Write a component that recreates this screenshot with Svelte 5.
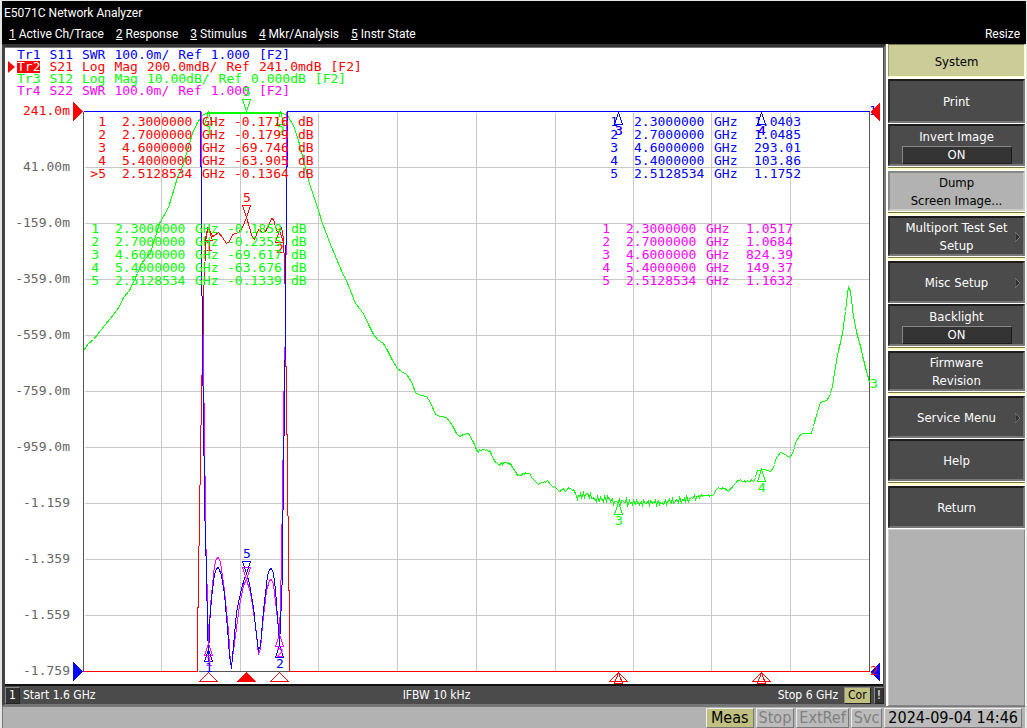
<script lang="ts">
	interface Marker {
		x: number;
		y: number;
		label: string;
		color: string;
		down?: boolean;
	}

	interface Softkey {
		lines: string[];
		value?: string;
		light?: boolean;
		submenu?: boolean;
		divided?: boolean; // yellow divider below the key
	}

	const menus = [
		['1', 'Active Ch/Trace'],
		['2', 'Response'],
		['3', 'Stimulus'],
		['4', 'Mkr/Analysis'],
		['5', 'Instr State']
	];

	const traces = [
		{ name: 'Tr1', setup: 'S11 SWR 100.0m/ Ref 1.000 [F2]', cls: 'blue' },
		{ name: 'Tr2', setup: 'S21 Log Mag 200.0mdB/ Ref 241.0mdB [F2]', cls: 'red' },
		{ name: 'Tr3', setup: 'S12 Log Mag 10.00dB/ Ref 0.000dB [F2]', cls: 'green' },
		{ name: 'Tr4', setup: 'S22 SWR 100.0m/ Ref 1.000 [F2]', cls: 'magenta' }
	];
	let activeTrace = 'Tr2';

	const freqs = ['2.3000000', '2.7000000', '4.6000000', '5.4000000', '2.5128534'];
	const readouts = [
		{ cls: 'red s21', unit: 'dB', active: 5, values: ['-0.1716', '-0.1799', '-69.746', '-63.905', '-0.1364'] },
		{ cls: 'green s12', unit: 'dB', active: 0, values: ['-0.1859', '-0.2355', '-69.617', '-63.676', '-0.1339'] },
		{ cls: 'blue s11', unit: '', active: 0, values: ['1.0403', '1.0485', '293.01', '103.86', '1.1752'] },
		{ cls: 'magenta s22', unit: '', active: 0, values: ['1.0517', '1.0684', '824.39', '149.37', '1.1632'] }
	];

	const scale = ['241.0m', '41.00m', '-159.0m', '-359.0m', '-559.0m', '-759.0m', '-959.0m', '-1.159', '-1.359', '-1.559', '-1.759'];
	const gridX = [161, 240, 318, 397, 476, 555, 633, 711, 790];
	const gridY = [167, 223, 279, 335, 391, 447, 503, 559, 615];

	const BLUE = '#0000ff';
	const RED = '#ff0000';
	const GREEN = '#00ff00';
	const MAGENTA = '#ff00ff';

	const s21 =
		'83,671 197,671 197,607 198,607 198,551 199,540 199,490 200,480 200,430 201,420 201,380 202,370 202,340 203,330 203,290 204,280 205,243 207,227 209,229 212,236 214,235 218,232 222,237 226,243 229,241 232,234 238,232 242,227 246,217 249,227 252,237 254,239 258,229 262,232 265,231 268,225 271,218 273,219 275,226 277,232 279,230 281,227 283,238 284,267 285,300 285,366 286,366 286,434 287,434 287,510 288,520 288,590 289,590 289,671 869,671';
	const s11 =
		'83,111 200,111 200,166 201,166 201,290 202,300 202,380 203,390 203,450 204,460 204,510 205,530 206,580 207,620 208,661 209,625 211,598 214,574 216,568 218,567 221,575 224,594 227,628 229,655 231,668 233,645 236,612 241,588 244,578 246,573 249,583 253,607 256,635 258,650 260,645 263,610 267,575 269,569 271,568 273,573 275,590 278,630 279,645 281,600 282,570 282,520 283,500 283,442 284,430 284,366 285,354 285,250 286,240 286,166 287,166 287,111 869,111';
	const s22 =
		'201,111 201,180 201,290 203,310 203,395 204,410 204,470 205,480 205,530 207,600 208,645 210,605 214,565 216,558 218,557 220,562 224,590 228,630 230,664 231,665 235,635 239,605 243,585 246,579 250,592 255,625 258,654 260,648 262,625 266,590 269,580 271,579 273,584 276,610 279,635 280,600 281,560 282,490 283,430 284,354 285,340 285,260 286,250 286,111';

	const s12Points = [
		83, 350, 88, 343, 93, 339, 97, 334, 104, 325, 110, 318, 119, 306, 123, 297, 129, 290, 137, 273, 141, 263, 150, 252, 155, 236, 159, 223,
		168, 207, 177, 177, 183, 163, 192, 133, 197, 122, 202, 115, 207, 112, 280, 112, 287, 115, 293, 125, 298, 140, 305, 167, 308, 180,
		318, 210, 322, 223, 330, 244, 340, 268, 348, 285, 355, 303, 360, 309, 364, 315, 368, 324, 373, 334, 377, 339, 383, 343, 387, 350,
		392, 360, 397, 368, 401, 371, 406, 374, 411, 381, 415, 392, 420, 395, 426, 396, 430, 402, 435, 414, 440, 416, 446, 417, 452, 425,
		456, 433, 459, 436, 463, 434, 468, 433, 472, 440, 477, 451, 483, 449, 489, 450, 494, 460, 498, 464, 504, 462, 510, 463, 514, 470,
		517, 475, 521, 475, 523, 473, 529, 473, 533, 479, 537, 483, 543, 482, 547, 480, 551, 485, 555, 487, 559, 491, 563, 488, 565, 491,
		568, 487, 574, 491, 576, 496, 582, 495, 587, 493, 594, 499, 602, 499, 608, 498, 614, 501, 640, 502, 662, 502, 680, 500, 692, 498,
		700, 495, 712, 495, 717, 488, 724, 488, 728, 491, 732, 486, 738, 480, 746, 481, 754, 480, 757, 470, 764, 469, 770, 471, 773, 467,
		776, 457, 780, 452, 785, 454, 789, 457, 792, 453, 796, 440, 800, 434, 803, 433, 811, 433, 815, 418, 820, 402, 826, 400, 829, 396,
		832, 386, 835, 366, 838, 350, 842, 333, 845, 311, 847, 293, 848, 287, 850, 291, 853, 316, 856, 331, 860, 346, 864, 363, 869, 382
	];

	// Fill in one sample per pixel, with receiver noise near the floor
	function sampleTrace(pts: number[]) {
		const out: string[] = [];
		for (let i = 0; i < pts.length - 2; i += 2) {
			const [x0, y0, x1, y1] = pts.slice(i, i + 4);
			out.push(`${x0},${y0}`);
			if (x0 < 470) continue;
			for (let x = x0 + 1; x < x1; x++) {
				const amp = x > 574 && x < 700 ? 4 : x < 760 ? 1 : 0;
				const noise = Math.round(Math.sin(x * 12.9898) * Math.cos(x * 4.1) * amp);
				out.push(`${x},${Math.round(y0 + ((y1 - y0) * (x - x0)) / (x1 - x0)) + noise}`);
			}
		}
		out.push(pts.slice(-2).join(','));
		return out.join(' ');
	}
	const s12 = sampleTrace(s12Points);

	const markers: Marker[] = [
		{ x: 208, y: 643, label: '1', color: MAGENTA },
		{ x: 279, y: 634, label: '2', color: MAGENTA },
		{ x: 246, y: 579, label: '', color: MAGENTA, down: true },
		{ x: 618, y: 112, label: '3', color: MAGENTA },
		{ x: 761, y: 112, label: '4', color: MAGENTA },
		{ x: 208, y: 112, label: '1', color: GREEN },
		{ x: 280, y: 112, label: '2', color: GREEN },
		{ x: 618, y: 502, label: '3', color: GREEN },
		{ x: 761, y: 469, label: '4', color: GREEN },
		{ x: 246, y: 111, label: '5', color: GREEN, down: true },
		{ x: 208, y: 228, label: '1', color: RED },
		{ x: 279, y: 230, label: '2', color: RED },
		{ x: 246, y: 217, label: '5', color: RED, down: true },
		{ x: 208, y: 649, label: '1', color: BLUE },
		{ x: 279, y: 645, label: '2', color: BLUE },
		{ x: 618, y: 112, label: '3', color: BLUE },
		{ x: 761, y: 112, label: '4', color: BLUE },
		{ x: 246, y: 573, label: '5', color: BLUE, down: true }
	];

	const softkeys: Softkey[] = [
		{ lines: ['Print'] },
		{ lines: ['Invert Image'], value: 'ON', divided: true },
		{ lines: ['Dump', 'Screen Image...'], light: true, divided: true },
		{ lines: ['Multiport Test Set', 'Setup'], submenu: true, divided: true },
		{ lines: ['Misc Setup'], submenu: true },
		{ lines: ['Backlight'], value: 'ON', divided: true },
		{ lines: ['Firmware', 'Revision'], divided: true },
		{ lines: ['Service Menu'], submenu: true },
		{ lines: ['Help'], divided: true },
		{ lines: ['Return'] }
	];
</script>

<div class="app">
	<header>
		<h1>E5071C Network Analyzer</h1>
		<nav>
			{#each menus as [key, label]}
				<button><u>{key}</u> {label}</button>
			{/each}
			<button class="resize">Resize</button>
		</nav>
	</header>

	<div class="body">
		<main>
			<div class="screen">
				<div class="traces">
					{#each traces as t (t.name)}
						<button class="trace {t.cls}" class:active={t.name === activeTrace} onclick={() => (activeTrace = t.name)}>
							<span class="name">{t.name}</span>
							{#each t.setup.split(' ') as word}
								<span>{word}</span>
							{/each}
						</button>
					{/each}
				</div>

				<svg class="plot" viewBox="5 97 878 587">
					<!-- half a pixel puts the one pixel strokes on whole pixels -->
					<g transform="translate(0.5 0.5)">
						{#each gridX as x}
							<line x1={x} y1="112" x2={x} y2="670" stroke="#c8c8c8" />
						{/each}
						{#each gridY as y}
							<line x1="84" y1={y} x2="868" y2={y} stroke="#c8c8c8" />
						{/each}
						<path d="M83 111v560M869 111v560M198 671h91" fill="none" stroke="#555" />
					</g>

					{#each scale as label, i}
						<text x="70" y={115 + i * 56} text-anchor="end" fill={i === 0 ? RED : '#666'}>{label}</text>
					{/each}

					<text x="869" y="115" fill={BLUE}>1</text>

					<g transform="translate(0.5 0.5)">
						<polyline points={s12} stroke={GREEN} />
						<line x1="206" y1="112" x2="281" y2="112" stroke={GREEN} stroke-width="2" />
						<polyline points={s22} stroke={MAGENTA} />
						<polyline points={s21} stroke={RED} />
						<polyline points={s11} stroke={BLUE} />
						{#each markers as m}
							<path d="M{m.x} {m.y}l-4 {m.down ? -12 : 12}h8z" fill="none" stroke={m.color} />
						{/each}
					</g>

					{#each markers as m}
						<text x={m.x + 1} y={m.down ? m.y - 15 : m.y + 23} text-anchor="middle" fill={m.color}>{m.label}</text>
					{/each}

					<!-- reference level handles -->
					<path d="M73 102v19l10-9z" fill={RED} />
					<path d="M73 662v19l10-9z" fill={BLUE} />
					<path d="M880 102v19l-10-9z" fill={RED} />
					<path d="M880 662v19l-10-9z" fill={BLUE} />
					<text x="870" y="675" fill={RED}>2</text>
					<text x="870" y="388" fill={GREEN}>3</text>

					<!-- stimulus markers -->
					<g transform="translate(0.5 0.5)">
						{#each [208, 246, 279, 618, 761] as x}
							<path d="M{x} 672l-9 9h18z" fill={x === 246 ? RED : 'none'} stroke={RED} />
						{/each}
						{#each [618, 761] as x}
							<path d="M{x} 672l-4 11h8z" fill="none" stroke={RED} />
						{/each}
					</g>
				</svg>

				{#each readouts as r}
					<table class="readout {r.cls}">
						<tbody>
							{#each freqs as f, i}
								<tr>
									<td class="num">{r.active === i + 1 ? '>' : ''}{i + 1}</td>
									<td class="freq">{f}</td>
									<td class="ghz">GHz</td>
									<td class="val">{r.values[i]}</td>
									<td>{r.unit}</td>
								</tr>
							{/each}
						</tbody>
					</table>
				{/each}
			</div>

			<div class="channel">
				<span class="box">1</span>
				<span class="start">Start 1.6 GHz</span>
				<span class="ifbw">IFBW 10 kHz</span>
				<span class="stop">Stop 6 GHz</span>
				<span class="box cor">Cor</span>
				<span class="box">!</span>
			</div>
		</main>

		<aside>
			<h2>System</h2>
			<ul>
				{#each softkeys as k}
					<li class:divided={k.divided}>
						<button class:light={k.light}>
							{#each k.lines as line}
								<span>{line}</span>
							{/each}
							{#if k.value}
								<span class="value">{k.value}</span>
							{/if}
							{#if k.submenu}
								<svg class="arrow" viewBox="0 0 6 12"><path d="M0 1v10l5-5z" fill="#333" stroke="#777" /></svg>
							{/if}
						</button>
					</li>
					{#if k.divided}
						<li class="divider" role="separator"></li>
					{/if}
				{/each}
			</ul>
			<div class="blank"></div>
		</aside>
	</div>

	<footer>
		<span class="on">Meas</span>
		<span>Stop</span>
		<span>ExtRef</span>
		<span>Svc</span>
		<time datetime="2024-09-04T14:46">2024-09-04 14:46</time>
	</footer>
</div>

<style>
	:global(body) {
		background: #e4e6e4;
	}

	.app {
		display: flex;
		flex-direction: column;
		min-height: 100vh;
		box-sizing: border-box;
		padding: 1px 1px 1px 2px;
		font-family: 'DejaVu Sans Condensed', 'DejaVu Sans', sans-serif;
		font-stretch: condensed;
		font-size: 12px;
	}

	button {
		font: inherit;
		color: inherit;
		background: none;
		border: 0;
		padding: 0;
	}

	header {
		background: #000;
		color: #fff;
		font-family: Roboto, 'Noto Sans', sans-serif;
		font-stretch: normal;
		font-size: 12px;
		height: 43px;
	}

	h1 {
		margin: 0;
		padding-left: 2px;
		font-size: 12px;
		font-weight: normal;
		line-height: 25px;
	}

	nav {
		display: flex;
		gap: 12px;
		padding: 0 6px 0 7px;
		line-height: 17px;
	}

	.resize {
		margin-left: auto;
	}

	.body {
		display: flex;
		flex: 1;
		background: #fff;
	}

	main {
		flex: 1;
		display: flex;
		flex-direction: column;
		border-style: solid;
		border-width: 3px 2px 2px 3px;
		border-color: #333 #777 #777 #444;
		background: #4b4b4b;
	}

	.screen {
		position: relative;
		background: #fff;
		border-top: 1px solid #777;
		border-bottom: 2px solid #111;
		margin-right: 1px;
		font-family: 'DejaVu Sans Mono', monospace;
		font-stretch: normal;
		font-size: 13px;
	}

	.traces {
		display: flex;
		flex-direction: column;
		align-items: flex-start;
		padding: 1px 0 0 3px;
	}

	.trace {
		display: flex;
		gap: 9px;
		height: 12px;
		line-height: 12px;
		padding-left: 9px;
	}

	.trace.active {
		padding-left: 0;
	}

	.trace.active::before {
		content: '';
		border: 6px solid transparent;
		border-left: 7px solid #f00;
		border-right: 0;
		margin-right: -7px;
	}

	.active .name {
		background: #f00;
		color: #fff;
	}

	.red {
		color: #f00;
	}
	.green {
		color: #0f0;
	}
	.blue {
		color: #00f;
	}
	.magenta {
		color: #f0f;
	}

	.plot {
		display: block;
		width: 100%;
		overflow: visible;
		shape-rendering: crispEdges;
	}

	.plot polyline {
		fill: none;
	}

	.readout {
		position: absolute;
		border-collapse: collapse;
		line-height: 13px;
	}

	.readout td {
		padding: 0 8px 0 0;
		height: 13px;
		white-space: nowrap;
	}

	.readout .num {
		width: 16px;
		padding-right: 16px;
		text-align: right;
	}
	.readout .freq {
		width: 72px;
	}
	.readout .ghz {
		width: 24px;
	}
	.readout .val {
		min-width: 56px;
	}

	.s21 {
		left: 85px;
		top: 67px;
	}
	.s12 {
		left: 78px;
		top: 174px;
	}
	.s11 {
		left: 597px;
		top: 67px;
	}
	.s22 {
		left: 589px;
		top: 174px;
	}
	.readout.s11 .ghz,
	.readout.s22 .ghz {
		padding-right: 16px;
	}

	.channel {
		flex: 1;
		display: flex;
		align-items: center;
		gap: 3px;
		padding-top: 1px;
		color: #fff;
		line-height: 15px;
	}

	.ifbw {
		flex: 1;
		text-align: center;
	}

	.box {
		padding: 0 3px;
		background: #333;
		border: 1px solid;
		border-color: #888 #222 #222 #888;
	}

	.box:last-child {
		padding: 0 2px;
	}

	.cor {
		background: #c0c080;
		color: #000;
		margin-left: 3px;
	}

	aside {
		width: 137px;
		display: flex;
		flex-direction: column;
		margin-left: 2px;
		padding-right: 1px;
		font-size: 13px;
	}

	h2 {
		margin: 0 0 2px;
		height: 31px;
		line-height: 33px;
		font-size: 13px;
		font-weight: normal;
		text-align: center;
		background: #cccc99;
		border: 1px solid;
		border-color: #777744 #ffffcc #ffffcc #999966;
	}

	ul {
		list-style: none;
		margin: 0;
		padding: 0;
	}

	li {
		height: 45px;
		box-sizing: border-box;
		padding-bottom: 1px;
	}

	li.divided {
		padding-bottom: 3px;
	}

	li.divider {
		position: relative;
		height: 5px;
		margin: -3px 0 -2px;
		padding: 0;
		background: linear-gradient(#fff 1px, #777744 1px 2px, #ffffcc 2px 4px, #fff 4px);
	}

	.divider + li {
		padding-top: 2px;
	}

	li button {
		position: relative;
		display: flex;
		flex-direction: column;
		align-items: center;
		justify-content: center;
		width: 100%;
		height: 100%;
		padding-top: 1px;
		line-height: 18px;
		color: #fff;
		background: #4b4b4b;
		border: 2px solid;
		border-color: #1c1c1c #777 #777 #2c2c2c;
	}

	li button.light {
		color: #000;
		background: #b2b2b2;
		border-color: #888 #ccc #ccc #888;
	}

	.value {
		width: 108px;
		line-height: 16px;
		background: #333;
		border: 1px solid;
		border-color: #888 #1c1c1c #1c1c1c #888;
	}

	.arrow {
		position: absolute;
		right: 2px;
		width: 6px;
		height: 12px;
	}

	.blank {
		flex: 1;
		background: #b2b2b2;
		border: 1px solid;
		border-color: #ccc #888 #888 #ccc;
	}

	footer {
		display: flex;
		justify-content: flex-end;
		gap: 2px;
		padding: 1px 3px 0 0;
		background: #b2b2b2;
		border: 1px solid;
		border-color: #777 #eee #eee #777;
		font-size: 16px;
		line-height: 18px;
		color: #808080;
	}

	footer span,
	footer time {
		padding: 0 2px;
		border: 1px solid;
		border-color: #eee #777 #777 #eee;
		background: #bbb;
	}

	footer .on {
		padding: 0 4px;
		background: #c0c080;
		color: #000;
	}

	footer time {
		padding: 0 3px;
		color: #000;
	}
</style>
